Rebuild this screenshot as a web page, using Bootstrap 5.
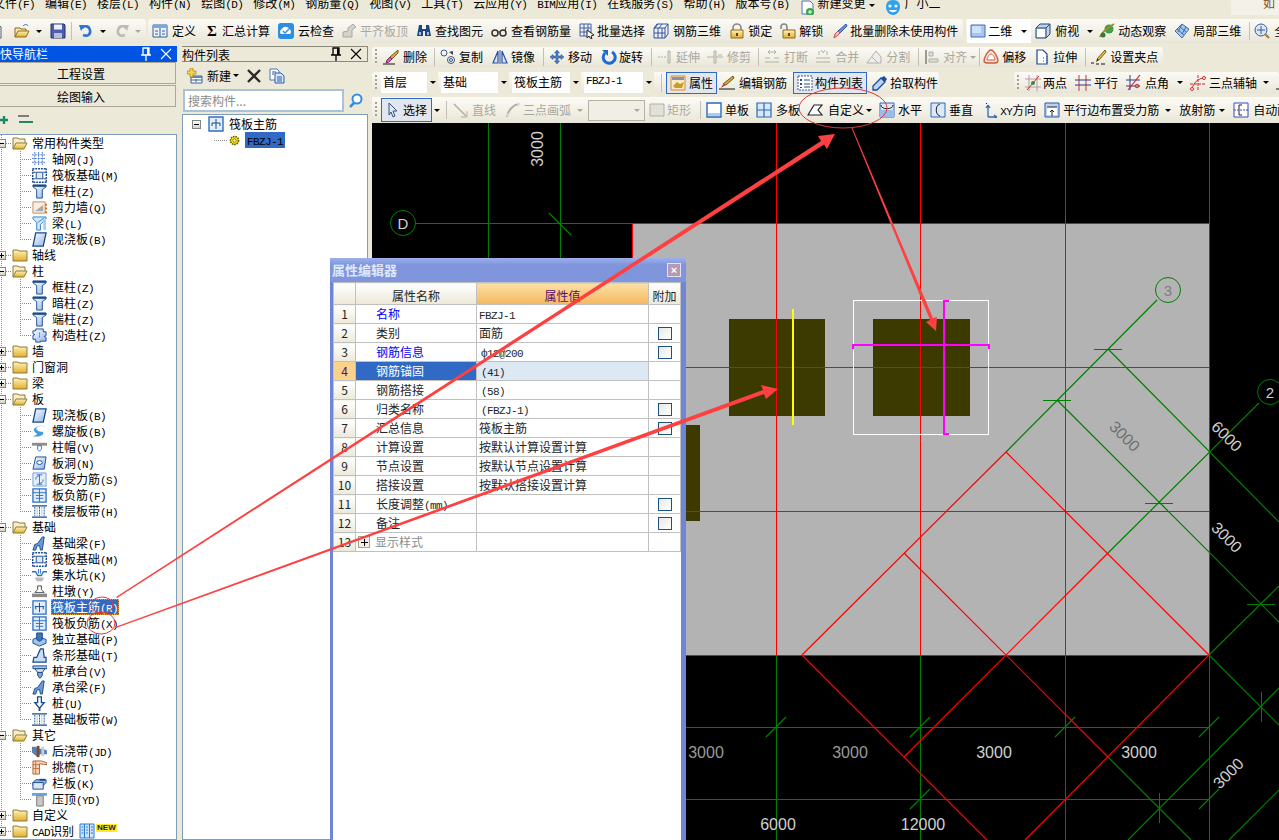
<!DOCTYPE html>
<html lang="zh">
<head>
<meta charset="UTF-8">
<title>钢筋算量</title>
<link href="https://cdn.jsdelivr.net/npm/bootstrap@5.3.2/dist/css/bootstrap.min.css" rel="stylesheet">
<style>
    body { margin: 0; background: #ece9d8; overflow: hidden; color: #000; font: 12px/16px "Noto Sans CJK SC", sans-serif; }
    .app-shell { position: relative; width: 1279px; height: 840px; overflow: hidden; background: #ece9d8; }
    .lt { font: 11px/12px "Liberation Mono", "Noto Sans CJK SC", monospace; letter-spacing: -.6px; }

    /* menu + toolbars */
    .menu-strip { height: 15px; overflow: hidden; margin-left: -7px; gap: 10px; }
    .menu-strip > span { line-height: 14px; margin-top: -4px; white-space: nowrap; }
    .menu-ic { margin-top: 4px; width: 15px; height: 15px; }
    .menu-right { color: #8a4a10; background: #f4f2e8; width: 48px; padding-left: 32px; }
    .tool-top { height: 30px; padding-top: 4px; }
    .band { height: 24px; border-radius: 3px; white-space: nowrap; flex: none; background: linear-gradient(#fbfaf5, #f1efe4 60%, #e8e5d8); }
    .ti { display: inline-flex; align-items: center; gap: 4px; margin-right: 8px; flex: none; }
    .ti.off, .off { color: #a9a89f; }
    .ic { width: 16px; height: 16px; flex: none; }
    .sg { width: 16px; text-align: center; font: bold 15px/16px "Liberation Serif", serif; }
    .sep { width: 1px; height: 18px; background: #c4c1b4; flex: none; }
    .car { width: 0; height: 0; flex: none; border: 3px solid transparent; border-top-color: #000; border-bottom-width: 0; }
    .car.off { border-top-color: #a9a89f; }
    .grip { width: 2px; height: 16px; margin: 0 6px 0 3px; flex: none; background: repeating-linear-gradient(#a5a294 0 2px, transparent 2px 4px); }
    .tb-a { margin-left: -12px; padding-right: 5px; }
    .tb-b { margin-left: 2px; padding: 0 5px 0 4px; }
    .tb-c { margin-left: 3px; flex-grow: 1; padding-left: 1px; }
    .dim-box { width: 64px; height: 24px; background: #fff; padding-left: 3px; flex: none; }
    .r2 { height: 20px; margin-top: 2px; width: 791px; }
    .r3 { height: 21px; margin-top: 5px; }
    .r3-left { width: 567px; height: 21px; }
    .r3-left .grip { margin-right: 4px; }
    .r3-right { margin-left: 75px; width: 265px; height: 21px; }
    .r4 { height: 26px; margin-top: 4px; border-radius: 0; width: 907px; }
    .r4 .pick-btn { width: 51px; height: 24px; gap: 2px; padding: 0 0 0 3px; }
    .cb { display: flex; height: 21px; background: #fff; flex: none; margin-right: 3px; padding-left: 2px; line-height: 19px; overflow: hidden; }
    .cb i { margin-left: auto; width: 11px; background: #ece9d8; display: flex; align-items: center; justify-content: center; }
    .cb .lt { line-height: 19px; }
    .w57 { width: 57px; } .w68 { width: 68px; } .w69 { width: 69px; } .w70 { width: 70px; }
    .chk { display: inline-flex; align-items: center; gap: 3px; padding: 0 3px; border: 1px solid #316ac5; background: #e1e6ef; flex: none; height: 22px; }
    .dis-box { width: 57px; height: 21px; border: 1px solid #b5b3a6; background: #f1efe5; display: flex; align-items: center; justify-content: flex-end; padding-right: 4px; flex: none; }

    /* spacing steps Bootstrap has no utility for */
    .g2 { gap: 2px; } .g3 { gap: 3px; } .g5 { gap: 5px; }
    .gr2 { margin-right: 2px; } .gr3 { margin-right: 3px; } .gr4 { margin-right: 4px; } .gr5 { margin-right: 5px; } .gr6 { margin-right: 6px; } .gr7 { margin-right: 7px; } .gr8 { margin-right: 8px; } .gr9 { margin-right: 9px; } .gr10 { margin-right: 10px; }
    .gl2 { margin-left: 2px; } .gl3 { margin-left: 3px; } .gl4 { margin-left: 4px; } .gl5 { margin-left: 5px; } .gl6 { margin-left: 6px; }

    /* dock panels */
    .nav-pane { width: 177px; flex: none; }
    .list-pane { width: 186px; margin-left: 5px; flex: none; }
    .pane-title { height: 16px; line-height: 15px; white-space: nowrap; overflow: hidden; padding-right: 3px; margin-top: 1px; }
    .pane-title.on { background: #0054e3; color: #fff; }
    .pane-title.idle { border: 1px solid #8b8979; border-width: 1px 1px 1px 0; }
    .wide-btn { height: 22px; width: 190px; margin: 0 0 1px -14px; padding: 0; border: 1px solid #aca899; border-radius: 0; background: #ece9d8; font-size: 12px; line-height: 19px; display: block; color: #000; }
    .mini-tool { height: 26px; }
    .tree-box { background: #fff; border: 1px solid #7f9db9; border-left: 0; height: 706px; overflow: hidden; }
    .tree-rw { height: 16px; display: flex; align-items: center; white-space: nowrap; background-repeat: no-repeat; }
    .tree-rw > span { display: block; height: 16px; line-height: 16px; }
    .tree-rw.top { padding-left: 12px; background-image: repeating-linear-gradient(90deg, #8a8a8a 0 1px, transparent 1px 2px), repeating-linear-gradient(#8a8a8a 0 1px, transparent 1px 2px); background-size: 12px 1px, 1px 16px; background-position: 0 8px, 1px 0; }
    .tree-rw.kid { padding-left: 32px; background-image: repeating-linear-gradient(90deg, #8a8a8a 0 1px, transparent 1px 2px), repeating-linear-gradient(#8a8a8a 0 1px, transparent 1px 2px), repeating-linear-gradient(#8a8a8a 0 1px, transparent 1px 2px); background-size: 12px 1px, 1px 16px, 1px 16px; background-position: 20px 8px, 20px 0, 1px 0; }
    .tree-rw.kid.end { background-size: 12px 1px, 1px 9px, 1px 16px; }
    .tree-rw.tail { background-size: 12px 1px, 1px 9px; }
    .tree-rw .ic { margin-right: 4px; }
    .tree-rw.kid .ic { width: 15px; height: 15px; margin-right: 5px; }
    .tree-rw .cad-ic { margin-left: 5px; margin-right: 0; }
    .xp { width: 9px; height: 9px; margin-left: -15px; margin-right: 6px; flex: none; border: 1px solid #848484; background: linear-gradient(#000, #000) center / 5px 1px no-repeat, linear-gradient(#fff, #d5d2c6); }
    .xp.pl { background: linear-gradient(#000, #000) center / 5px 1px no-repeat, linear-gradient(#000, #000) center / 1px 5px no-repeat, linear-gradient(#fff, #d5d2c6); }
    .tree-rw > .hit { background: #316ac5; color: #fff; margin-left: -1px; padding: 0 1px; outline: 1px dotted #e0a040; outline-offset: -1px; }
    .tree-rw > .new-tag { background: #ffe92e; color: #223; font: bold 8px/8px "Liberation Sans", sans-serif; height: 8px; padding: 0 1px; margin: -6px 0 0 1px; }
    .list-tool { height: 27px; padding-left: 5px; }
    .seek { height: 23px; padding-left: 1px; }
    .seek .form-control { width: 161px; height: 23px; padding: 0 3px; border: 2px solid #a9c2dc; border-radius: 0; font-size: 12px; }
    .seek .form-control::placeholder { color: #8a8a8a; }
    .list-tree { height: 726px; margin-top: 2px; padding-top: 1px; border: 1px solid #7f9db9; background: #fff; overflow: hidden; }
    .list-top { padding-left: 25px; }
    .list-top .xp { margin-left: -16px; margin-right: 7px; }
    .list-top .ic { margin-right: 5px; }
    .list-kid { padding-left: 45px; background: repeating-linear-gradient(90deg, #8a8a8a 0 1px, transparent 1px 2px) 31px 8px / 14px 1px no-repeat; }
    .list-kid .ic { width: 13px; height: 13px; margin-right: 4px; }
    .tree-rw > .list-hit { background: #316ac5; color: #000; padding: 0 2px; }

    .main-col { width: 907px; margin-left: 4px; flex: none; }
    .cad-wrap { height: 717px; background: #000; }
    .cad-wrap svg { display: block; }
    .cad-txt { font: 16px "Liberation Sans", sans-serif; }

    /* floating property window */
    .prop-win { position: absolute; left: 330px; top: 258px; width: 356px; height: 590px; background: #fff; border: solid #6f85d8; border-width: 0 5px 0 3px; z-index: 5; }
    .prop-head { height: 24px; margin: 0 -5px 0 -3px; padding: 0 5px 0 2px; background: linear-gradient(#9db0ea, #7e95dc 30%, #7f96dc); color: #dfe7fa; font-weight: 700; font-size: 13px; line-height: 24px; }
    .close-x { width: 14px; height: 14px; background: #b39ab8; color: #fff; border: 1px solid #e8e2ee; font: bold 11px/12px "Liberation Sans", sans-serif; text-align: center; }
    .prop-tbl { table-layout: fixed; width: 347px; margin: 0; border-color: #c0c0c0; vertical-align: middle; }
    .prop-tbl tr { height: 19px; }
    .prop-tbl td, .prop-tbl th { padding: 0; height: 19px; line-height: 16px; font-size: 12px; border-color: #c0c0c0; white-space: nowrap; overflow: hidden; box-shadow: none; }
    .prop-tbl thead tr { height: 22px; }
    .prop-tbl th { height: 22px; font-weight: 400; text-align: center; background: linear-gradient(#fff, #ece9d8); }
    .prop-tbl th.val-h { background: linear-gradient(#fcdfa6, #f4b85e); color: #5b0f6b; }
    .prop-tbl td.no { background: linear-gradient(#fff, #ece9d8); text-align: center; }
    .prop-tbl td.no.cur { background: #fbd28c; color: #5b0f6b; }
    .prop-tbl td.nm { padding-left: 20px; }
    .prop-tbl td.nm.cur { background: #316ac5; color: #fff; }
    .prop-tbl td.v { padding-left: 2px; }
    .prop-tbl td.v.cur { background: #dde8f5; }
    .lt.in { margin-left: 2px; }
    .prop-tbl td.blue-t { color: #0000ff; }
    .prop-tbl td.gray-t { color: #8c8c8c; }
    .c1 { width: 22px; } .c2 { width: 121px; } .c3 { width: 172px; } .c4 { width: 32px; }
    .prop-tbl .form-check-input { display: block; width: 14px; height: 13px; margin: 0 auto; border: 1px solid #1c5180; border-radius: 0; background: linear-gradient(135deg, #e8e8e2, #fff); }
    .plus-box { display: inline-block; width: 12px; height: 12px; border: 1px solid #a5a294; margin: 2px 5px 0 2px; vertical-align: top; background: linear-gradient(#000, #000) center / 7px 1px no-repeat, linear-gradient(#000, #000) center / 1px 7px no-repeat, #f1efe6; }

    .mark-up { position: absolute; left: 0; top: 0; z-index: 9; pointer-events: none; }
</style>
</head>
<body>

<!-- icon sprite -->
<svg class="d-block" width="0" height="0">
<defs>
<linearGradient id="gF" x1="0" y1="0" x2="0" y2="1"><stop offset="0" stop-color="#fff3b8"/><stop offset="1" stop-color="#e3ad2a"/></linearGradient>
<linearGradient id="gB" x1="0" y1="0" x2="1" y2="1"><stop offset="0" stop-color="#fff"/><stop offset="1" stop-color="#8fb4ea"/></linearGradient>
<symbol id="fold" viewBox="0 0 16 16"><path d="M1 3h5l1 1h8v10H1z" fill="url(#gF)" stroke="#8c7a3c"/></symbol>
<symbol id="foldo" viewBox="0 0 16 16"><path d="M1 14V3h5l1 1h6v4" fill="#f8edc4" stroke="#8c7a3c"/><path d="M1 14l3-6h11l-3 6z" fill="url(#gF)" stroke="#8c7a3c"/></symbol>
<symbol id="grid" viewBox="0 0 16 16"><path d="M0 3h15M0 7h15M0 11h15M3 0v14M7 0v14M11 0v14" stroke="#3f74c4" fill="none" stroke-dasharray="2 1"/></symbol>
<symbol id="raft" viewBox="0 0 16 16"><path d="M.5.5h15v15H.5z" fill="#fff" stroke="#174a8c" stroke-width="2" stroke-dasharray="2 1"/><path d="M4.500 4.500h7v7h-7z" fill="#dce8f8" stroke="#174a8c"/><path d="M1 4.500h3M12 4.500h3M1 11.500h3M12 11.500h3" stroke="#174a8c"/></symbol>
<symbol id="col" viewBox="0 0 16 16"><path d="M1 1h14v2l-4 3v9H5V6L1 3z" fill="url(#gB)" stroke="#174a8c"/><path d="M1 1h14v2H1z" fill="#174a8c"/></symbol>
<symbol id="gcol" viewBox="0 0 16 16"><path d="M4 1h8v3h3v4l-2 1 2 1v4H9v1H4v-3H1V8l2-1-2-1V3h3z" fill="url(#gB)" stroke="#174a8c"/><path d="M8 5v6" stroke="#174a8c" stroke-dasharray="1 1"/></symbol>
<symbol id="wall" viewBox="0 0 16 16"><path d="M1 2h13v12H1z" fill="#fbeee0" stroke="#b98a66"/><path d="M3 12l9-7v7z" fill="#aaa"/><path d="M15 4v2M15 8v2M15 12v2" stroke="#e06a10" stroke-width="2"/></symbol>
<symbol id="beam" viewBox="0 0 16 16"><path d="M1 1h14v2L9 9v6H5V7L1 3z" fill="#d6e6f9" stroke="#2f80c8"/><path d="M6 7l7-5" stroke="#2f80c8"/><path d="M12 3h3v12h-3z" fill="#a6ccf0"/></symbol>
<symbol id="slab" viewBox="0 0 16 16"><path d="M4 1h11l-3 14H1z" fill="url(#gB)" stroke="#174a8c" stroke-width="1.4"/></symbol>
<symbol id="spir" viewBox="0 0 16 16"><path d="M15 3C9 1 3 3 5 6s8 1 7 4-7 4-11 3c3-1 5-2 4-3S2 8 2 6s6-6 13-3z" fill="#3f9be0"/></symbol>
<symbol id="mush" viewBox="0 0 16 16"><path d="M0 3h16v3H0z" fill="#8d8d8d"/><path d="M6 6h4v4l-2 2-2-2z" fill="#fff" stroke="#2f6fc0"/></symbol>
<symbol id="hole" viewBox="0 0 16 16"><path d="M4 1h11l-2 13H1z" fill="url(#gB)" stroke="#174a8c"/><ellipse cx="8" cy="7" rx="3" ry="2" fill="#fff" stroke="#174a8c"/></symbol>
<symbol id="rs" viewBox="0 0 16 16"><path d="M1 1h14v14H1z" fill="#e4eefb" stroke="#6f9bd6"/><path d="M5 3h6M8 3v10M5 13h6M4 8c0-3 2-4 4-4M12 8c0 3-2 4-4 4" stroke="#2f6fc0" fill="none"/></symbol>
<symbol id="rn" viewBox="0 0 16 16"><path d="M1 1h14v14H1z" fill="#e4eefb" stroke="#2f6fc0" stroke-width="1.4"/><path d="M1 5h14M8 1v14M4 8h8M4 11h8" stroke="#2f6fc0"/></symbol>
<symbol id="band2" viewBox="0 0 16 16"><path d="M0 2h16M0 14h16" stroke="#174a8c" stroke-width="1.5"/><path d="M3 3v10M8 3v10M13 3v10" stroke="#174a8c" stroke-dasharray="2 1"/><path d="M5 3h1v10H5zM10 3h1v10h-1z" fill="#a6c6ee"/></symbol>
<symbol id="fbeam" viewBox="0 0 16 16"><path d="M1 15l2-6 3-1 5-7h2l-2 14H9l-1-5-3 1-1 4z" fill="#6b9ad8" stroke="#174a8c"/></symbol>
<symbol id="pit" viewBox="0 0 16 16"><path d="M0 4h4l2 4h4l2-4h4" fill="none" stroke="#2f6fc0" stroke-width="1.4"/><path d="M3 10h10l-2 4H5z" fill="#b9b9b9"/><path d="M7 1v5M9 1v5" stroke="#2f6fc0"/></symbol>
<symbol id="pier" viewBox="0 0 16 16"><path d="M6 2h4v4l3 3H3l3-3z" fill="#fff" stroke="#444"/><path d="M0 10h16v4H0z" fill="#8a8a8a"/><path d="M0 10h16" stroke="#ddd"/></symbol>
<symbol id="rmain" viewBox="0 0 16 16"><path d="M1 1h14v14H1z" fill="#e4eefb" stroke="#2f6fc0" stroke-width="1.4"/><path d="M8 3v10M3 7h10" stroke="#174a8c"/><path d="M4 7v3M12 7v3" stroke="#174a8c"/></symbol>
<symbol id="iso" viewBox="0 0 16 16"><path d="M1 8l6-3 8 3v4l-7 3-7-3z" fill="#a3c4ea" stroke="#174a8c"/><path d="M5 1h6v7l-3 2-3-2z" fill="#3e73b6" stroke="#174a8c"/></symbol>
<symbol id="strip" viewBox="0 0 16 16"><path d="M1 15l1-5h3l4-9h3l1 9h2v5z" fill="#c9dcf4" stroke="#174a8c" stroke-width="1.3"/></symbol>
<symbol id="capst" viewBox="0 0 16 16"><path d="M1 2h15v3H1z" fill="#a9c8ee" stroke="#174a8c"/><path d="M3 5h11l-3 4H6z" fill="#ddd" stroke="#174a8c"/><path d="M6 9h5v3l-2 3h-1l-2-3z" fill="#7ea6dc" stroke="#174a8c"/></symbol>
<symbol id="pile" viewBox="0 0 16 16"><path d="M6 1h4v6h3l-5 6-5-6h3z" fill="#fff" stroke="#174a8c" stroke-width="1.4"/><path d="M7 13h2v3H7z" fill="#174a8c"/></symbol>
<symbol id="post" viewBox="0 0 16 16"><path d="M0 3h4l2 2h6l4 2v4H9l-4 2-3-2-2-2z" fill="#5b80b0"/><path d="M5 2h3v12H5z" fill="#7a4b2c"/><path d="M10 3h3v10h-3z" fill="#bcd0ea"/></symbol>
<symbol id="eave" viewBox="0 0 16 16"><path d="M1 1h9l6 2v2l-8-1v11H1z" fill="#f5d8bc" stroke="#a56236"/><path d="M1 5h7M1 9h7M4 1v14" stroke="#c96a2a"/></symbol>
<symbol id="rail" viewBox="0 0 16 16"><path d="M1 7l3-3h11v3l-3 3H1z" fill="#8fb6e8" stroke="#174a8c"/><path d="M1 7h11v7H1z" fill="#d8e6f7" stroke="#174a8c"/><path d="M8 3h6v2H8z" fill="#174a8c"/></symbol>
<symbol id="press" viewBox="0 0 16 16"><path d="M0 1h16v3H0z" fill="#6ea0dc"/><path d="M5 4h7v11H5z" fill="#c8c8c8" stroke="#777"/></symbol>
<symbol id="cross" viewBox="0 0 16 16"><path d="M1 1h14v14H1z" fill="#e4eefb" stroke="#2f6fc0" stroke-width="1.4"/><path d="M8 3v10M4 7h8M4 7v3M12 7v3" stroke="#174a8c" fill="none"/></symbol>
<symbol id="gear" viewBox="0 0 16 16"><circle cx="8" cy="8" r="5" fill="#ffe600" stroke="#6b6000" stroke-width="2" stroke-dasharray="2 1"/><circle cx="8" cy="8" r="2" fill="#fff" stroke="#6b6000"/></symbol>

<symbol id="new" viewBox="0 0 16 16"><path d="M3 1h7l3 3v11H3z" fill="#fff" stroke="#556"/></symbol>
<symbol id="open" viewBox="0 0 16 16"><path d="M1 14V5h5l1 1h5v2" fill="#f8e7ad" stroke="#8a6d1f"/><path d="M1 14l3-6h11l-3 6z" fill="url(#gF)" stroke="#8a6d1f"/><path d="M9 3c2-2 4-2 5 0" stroke="#2d62b8" fill="none"/></symbol>
<symbol id="save" viewBox="0 0 16 16"><path d="M1 1h13l1 1v13H1z" fill="#4a5fb4" stroke="#26316f"/><path d="M4 1.500h8v5H4z" fill="#eef1fa"/><path d="M4 10h8v5H4z" fill="#b9bfcc"/></symbol>
<symbol id="undo" viewBox="0 0 16 16"><path d="M5 12c5 2 8-1 7-5S7 2 4 5" fill="none" stroke="#2d74d2" stroke-width="2.600"/><path d="M1 2h6L3 8z" fill="#2d74d2"/></symbol>
<symbol id="redo" viewBox="0 0 16 16"><path d="M11 12C6 14 3 11 4 7s5-5 8-2" fill="none" stroke="#bdbcb4" stroke-width="2.600"/><path d="M15 2H9l4 6z" fill="#bdbcb4"/></symbol>
<symbol id="def" viewBox="0 0 16 16"><path d="M1 2h14v12H1z" fill="#eef3fb" stroke="#31619f"/><path d="M1 2h14v3H1z" fill="#7ea7db"/><path d="M8 5v9M3 8h3M3 11h3M10 8h3M10 11h3" stroke="#31619f"/></symbol>
<symbol id="cloud" viewBox="0 0 16 16"><rect x="0" y="0" width="16" height="16" rx="3" fill="#2c8fe2"/><path d="M3 11a3 3 0 0 1 1-5c1-3 6-3 7 0a3 3 0 0 1 1 5z" fill="#fff"/><path d="M5 8l2 2 4-4" stroke="#2c8fe2" fill="none" stroke-width="1.400"/></symbol>
<symbol id="lvl" viewBox="0 0 16 16"><path d="M1 14V9l5-1V5l5-4 3 3-4 3v7z" fill="#d4d3cb" stroke="#aaa99f"/></symbol>
<symbol id="bino" viewBox="0 0 16 16"><path d="M3 2h3v4h4V2h3l2 11h-6V8H7v5H1z" fill="#20457e"/><path d="M3 9h2v3H3zM11 9h2v3h-2z" fill="#9dbbe6"/></symbol>
<symbol id="spec" viewBox="0 0 16 16"><circle cx="4" cy="10" r="3" fill="none" stroke="#333" stroke-width="1.500"/><circle cx="12" cy="10" r="3" fill="none" stroke="#333" stroke-width="1.500"/><path d="M7 9h2M14 8l1-4" stroke="#333"/></symbol>
<symbol id="batch" viewBox="0 0 16 16"><path d="M1 1h11v12H1zM1 5h11M1 9h11M5 1v12M9 1v12" fill="#eef" stroke="#41619a"/><path d="M8 7l7 5-3 1 1 3-2-1-1-2-2 2z" fill="#fff" stroke="#222"/></symbol>
<symbol id="r3d" viewBox="0 0 16 16"><path d="M1 5h11v10H1zM1 5l3-4h11l-3 4M15 1v10l-3 4M5 5v10M9 5v10M1 10h11M5 1L2 5M9 1L6 5" fill="none" stroke="#2d55a8"/></symbol>
<symbol id="lock" viewBox="0 0 16 16"><path d="M4 7V5a4 4 0 0 1 8 0v2" fill="none" stroke="#888" stroke-width="1.600"/><path d="M2 7h12v8H2z" fill="url(#gF)" stroke="#926a18"/><path d="M7 10h2v3H7z" fill="#60460c"/></symbol>
<symbol id="unlock" viewBox="0 0 16 16"><path d="M1 6V4a3 3 0 0 1 6 0v3" fill="none" stroke="#888" stroke-width="1.600"/><path d="M3 7h12v8H3z" fill="url(#gF)" stroke="#926a18"/><path d="M8 10h2v3H8z" fill="#60460c"/></symbol>
<symbol id="brush" viewBox="0 0 16 16"><path d="M14 1l1 2-7 7-2-2z" fill="#6a8fd8" stroke="#3358a8"/><path d="M6 8l2 2-3 3-3 2 1-4z" fill="#f0c0c0" stroke="#c85050"/></symbol>
<symbol id="d2" viewBox="0 0 16 16"><path d="M1 2h14v12H1z" fill="#a9c6f2" stroke="#3f6cc0"/><path d="M2 3h9v7H2z" fill="#cfe0fa"/></symbol>
<symbol id="topv" viewBox="0 0 16 16"><path d="M1 5l4-4h10v10l-4 4H1z" fill="#bcd4ee" stroke="#23456e"/><path d="M2 6h8v8H2z" fill="#fff"/><path d="M1 5h10v10M11 5l4-4" fill="none" stroke="#23456e"/></symbol>
<symbol id="orbit" viewBox="0 0 16 16"><circle cx="10" cy="6" r="4.500" fill="#3da04a"/><path d="M1 14C3 9 8 5 15 1" stroke="#a6882c" fill="none" stroke-width="2"/><circle cx="4" cy="12" r="2.500" fill="#2d7c3c"/></symbol>
<symbol id="loc3" viewBox="0 0 16 16"><path d="M8 1l7 5-7 9-7-7z" fill="#a8c6ec" stroke="#3f6ca8"/><path d="M5 3l7 6M3 6l7 6M8 1L4 9M12 4l-4 7" stroke="#3f6ca8"/></symbol>
<symbol id="zoomb" viewBox="0 0 16 16"><circle cx="7" cy="7" r="6" fill="#dbe6f6" stroke="#3a5a9a"/><path d="M7 3v8M3 7h8" stroke="#3a5a9a"/><path d="M11 11l4 4" stroke="#a8823a" stroke-width="2.400"/></symbol>

<symbol id="eras" viewBox="0 0 16 16"><path d="M15 1l-8 7 2 2 6-6z" fill="#d8a65c" stroke="#7a5818"/><path d="M7 8l2 2-3 3-3 1 1-3z" fill="#d55fb0" stroke="#803070"/><path d="M0 15h12" stroke="#111"/></symbol>
<symbol id="cop" viewBox="0 0 16 16"><circle cx="4" cy="4" r="3" fill="none" stroke="#3a5a8a"/><circle cx="11" cy="11" r="3.500" fill="none" stroke="#3a5a8a"/><circle cx="11" cy="11" r="1.500" fill="none" stroke="#3a5a8a"/><path d="M9 3l4 3V2z" fill="#444"/></symbol>
<symbol id="mir" viewBox="0 0 16 16"><path d="M6 2L1 14h5zM10 2l5 12h-5z" fill="#d6e4f8" stroke="#2a52a4" stroke-width="1.200"/><path d="M8 1v14" stroke="#2a52a4"/></symbol>
<symbol id="mov" viewBox="0 0 16 16"><path d="M8 1l2.500 3H9v3h3V5.500L15 8l-3 2.500V9H9v3h1.500L8 15l-2.500-3H7V9H4v1.500L1 8l3-2.500V7h3V4H5.500z" fill="#4d7ec4" stroke="#224a86" stroke-width=".5"/></symbol>
<symbol id="rot" viewBox="0 0 16 16"><path d="M11 3a6 6 0 1 1-7 1" fill="none" stroke="#1f6ad2" stroke-width="3"/><path d="M1 1h6v6z" fill="#1f6ad2"/></symbol>
<symbol id="ext" viewBox="0 0 16 16"><path d="M1 8h9" stroke="#b2b1a8" stroke-dasharray="2 1"/><path d="M11 2h2v12h-2z" fill="#e8e7df" stroke="#b2b1a8"/></symbol>
<symbol id="trim" viewBox="0 0 16 16"><path d="M0 8h16" stroke="#b2b1a8"/><path d="M7 2h2v12H7z" fill="#e8e7df" stroke="#b2b1a8"/><path d="M11 6h4" stroke="#b2b1a8"/></symbol>
<symbol id="brk" viewBox="0 0 16 16"><path d="M1 9h5M10 9h5M1 13h14M4 3h8M6 1l-2 2 2 2M10 1l2 2-2 2" fill="none" stroke="#b2b1a8"/></symbol>
<symbol id="mrg" viewBox="0 0 16 16"><path d="M1 9h14M1 13h14M6 1l2 3 2-3M4 2v4M12 2v4" fill="none" stroke="#b2b1a8"/></symbol>
<symbol id="spl" viewBox="0 0 16 16"><path d="M1 14h14V8l-5-6-9 12zM6 8l6 6" fill="#eee" stroke="#b2b1a8"/></symbol>
<symbol id="ali" viewBox="0 0 16 16"><path d="M2 1v14" stroke="#9b9a91" stroke-width="2"/><path d="M5 3h4v4H5zM5 10h9v3H5z" fill="#ddd" stroke="#b2b1a8"/></symbol>
<symbol id="offs" viewBox="0 0 16 16"><path d="M8 1c3 0 7 8 7 11 0 2-2 2-7 2s-7 0-7-2C1 9 5 1 8 1z" fill="#fbe6de" stroke="#d05a3c" stroke-width="1.400"/><path d="M8 5c2 0 4 4 4 6H4c0-2 2-6 4-6z" fill="#fff" stroke="#d05a3c"/></symbol>
<symbol id="strt" viewBox="0 0 16 16"><path d="M2 1h6l4 4v10H2z" fill="#fff" stroke="#1f4a94" stroke-width="1.200"/><path d="M12 7v8M8 9h1M8 12h1" stroke="#1f4a94" stroke-dasharray="1 1"/></symbol>
<symbol id="setg" viewBox="0 0 16 16"><path d="M14 1l1 2-7 8-2-1z" fill="#e5c24c" stroke="#7a5c10"/><path d="M6 10l2 1-3 2z" fill="#222"/><path d="M0 14h3M5 15h3M10 15h4" stroke="#111"/></symbol>
<symbol id="prop" viewBox="0 0 16 16"><path d="M1 1h14v14H1z" fill="#fbe9c8" stroke="#de8a24"/><path d="M2 2h12v3H2z" fill="#7f93b5"/><path d="M3 11l4-4 3 2 4-2-2 6H5z" fill="#c89a2c"/></symbol>
<symbol id="edr" viewBox="0 0 16 16"><path d="M14 1l1 2-8 7-3-1z" fill="#d9a63a" stroke="#7a5618"/><path d="M0 14h16" stroke="#111"/><path d="M4 9l3 1-5 3z" fill="#c85050"/></symbol>
<symbol id="lst" viewBox="0 0 16 16"><path d="M1 1h14v14H1z" fill="#fff" stroke="#3a5a8a" stroke-dasharray="2 1"/><path d="M3 4h2v2H3zM3 8h2v2H3zM3 12h2v1H3z" fill="#2a4a8a"/><path d="M7 5h6M7 9h6M7 12h6" stroke="#2a4a8a"/></symbol>
<symbol id="pick" viewBox="0 0 16 16"><path d="M9 3l4 4-8 8H1v-4z" fill="#b9d4f4" stroke="#1e4a9c" stroke-width="1.300"/><path d="M9 3l3-2 3 3-2 3z" fill="#1e4a9c"/></symbol>
<symbol id="two" viewBox="0 0 16 16"><path d="M0 4h16M0 12h16M4 0v16M12 0v16" stroke="#b89aa8"/><path d="M14 1L2 15" stroke="#d02a2a"/><circle cx="8" cy="8" r="2" fill="#3a8a3a"/></symbol>
<symbol id="par" viewBox="0 0 16 16"><path d="M4 0v16M11 0v16" stroke="#c8383c"/><path d="M0 5h16M0 10h16" stroke="#2a3a8a"/></symbol>
<symbol id="ang" viewBox="0 0 16 16"><path d="M0 5h14M0 11h14M4 0v15" stroke="#2a3a8a"/><path d="M14 0L2 15" stroke="#d0282c" stroke-width="1.200"/><circle cx="11" cy="11" r="1.800" fill="none" stroke="#d0282c"/></symbol>
<symbol id="tri" viewBox="0 0 16 16"><path d="M2 15C3 8 8 3 15 3" fill="none" stroke="#d0282c"/><path d="M0 9h16M8 0v16" stroke="#d0282c" stroke-dasharray="3 1"/><circle cx="2" cy="14" r="1.500" fill="#fff" stroke="#d0282c"/><circle cx="14" cy="3" r="1.500" fill="#fff" stroke="#d0282c"/></symbol>

<symbol id="arr" viewBox="0 0 16 16"><path d="M4 1l8 8H8l2 5-2 1-2-5-2 3z" fill="#dfe8f6" stroke="#36507e"/></symbol>
<symbol id="lin" viewBox="0 0 16 16"><path d="M1 2l12 12" stroke="#b2b1a8" stroke-width="1.600"/><path d="M14 15H8M14 15V9" stroke="#b2b1a8"/></symbol>
<symbol id="arc" viewBox="0 0 16 16"><path d="M2 15C3 8 8 3 14 2" fill="none" stroke="#b2b1a8" stroke-width="2"/><circle cx="3" cy="13" r="1.500" fill="#ddd"/><circle cx="14" cy="2" r="1.500" fill="#ddd"/></symbol>
<symbol id="rct" viewBox="0 0 16 16"><path d="M1 2h14v12H1z" fill="#e2e1d8" stroke="#b2b1a8"/></symbol>
<symbol id="one" viewBox="0 0 16 16"><path d="M1 1h14v14H1z" fill="#fff" stroke="#2a6ab8" stroke-width="1.400"/><path d="M2 11h12v3H2z" fill="#a8cdf2"/></symbol>
<symbol id="many" viewBox="0 0 16 16"><path d="M1 1h14v14H1zM8 1v14M1 8h14" fill="#d8e8f9" stroke="#2a6ab8" stroke-width="1.200"/></symbol>
<symbol id="cst" viewBox="0 0 16 16"><path d="M1 13L7 3h8L11 8l4 5z" fill="#fff" stroke="#222" stroke-width="1.200"/></symbol>
<symbol id="hor" viewBox="0 0 16 16"><path d="M1 1h14v14H1z" fill="#dce8f8" stroke="#2a6ab8"/><path d="M1 8h14v7H1z" fill="#99bde8"/><path d="M2 3c0 5 12 5 12 0" fill="none" stroke="#222"/></symbol>
<symbol id="ver" viewBox="0 0 16 16"><path d="M1 1h14v14H1z" fill="#dce8f8" stroke="#2a6ab8"/><path d="M10 2C5 3 5 13 10 14" fill="none" stroke="#222"/></symbol>
<symbol id="xy" viewBox="0 0 16 16"><path d="M6 15V3M6 15h9M6 3L4 6M6 3l2 3M15 15l-3-2M15 15l-3 2" stroke="#2a6ab8" fill="none" stroke-width="1.300"/><path d="M4 1l1 1M5 1L4 2" stroke="#111"/></symbol>
<symbol id="pedg" viewBox="0 0 16 16"><path d="M1 1h14v14H1z" fill="#bcd4f2" stroke="#2a5aa8"/><path d="M3 5h10v8H3z" fill="#fff"/><path d="M3 5h10M8 14V8M6 10l2-2 2 2" stroke="#222" fill="none"/></symbol>
<symbol id="auto" viewBox="0 0 16 16"><path d="M1 1h14v14H1z" fill="#fff" stroke="#3a4ab8"/><path d="M9 3H6v10h3" fill="none" stroke="#222"/><path d="M1 8h14" stroke="#3a4ab8" stroke-dasharray="2 1"/></symbol>

<symbol id="addn" viewBox="0 0 16 16"><path d="M4 8h11v7H4z" fill="#fff" stroke="#3c5f9c"/><path d="M4 8h11v2H4z" fill="#5d86c4"/><path d="M9 11v3M4 12h11" stroke="#3c5f9c"/><path d="M3 0h3v3h3v3H6v3H3V6H0V3h3z" fill="#f8d24c" stroke="#927414" stroke-width=".6"/></symbol>
<symbol id="delx" viewBox="0 0 16 16"><path d="M2 2l12 12M14 2L2 14" stroke="#2a2a2a" stroke-width="2.400"/></symbol>
<symbol id="dup" viewBox="0 0 16 16"><path d="M1 1h7l2 2v9H1z" fill="#fff" stroke="#4a74b4"/><path d="M6 5h6l3 3v7H6z" fill="#dbe7f8" stroke="#2a5aa8"/><path d="M8 9h5M8 11h5M8 13h5M3 4h4M3 6h2" stroke="#2a5aa8"/></symbol>
<symbol id="mag" viewBox="0 0 16 16"><circle cx="9" cy="6" r="4.500" fill="#fff" stroke="#2f8fe0" stroke-width="2"/><path d="M6 10l-4 4" stroke="#2f8fe0" stroke-width="2.500"/></symbol>
<symbol id="doc2" viewBox="0 0 16 16"><path d="M3 1h8l3 3v10H3z" fill="#fff" stroke="#4a74b4"/><circle cx="11" cy="12" r="4" fill="#3aa64a"/><path d="M9 12h4M11 10v4" stroke="#fff"/></symbol>
<symbol id="face" viewBox="0 0 16 16"><path d="M8 0c5 0 7 3 7 7s-3 8-7 8-7-4-7-8 2-7 7-7z" fill="#2ea2ea"/><circle cx="5" cy="6" r="1.600" fill="#fff"/><circle cx="11" cy="6" r="1.600" fill="#fff"/><path d="M4 10c2 3 6 3 8 0z" fill="#fff"/></symbol>
<symbol id="cadt" viewBox="0 0 16 16"><path d="M1 1h14v14H1z" fill="#cfe4fb" stroke="#2a7ad8"/><path d="M5.500 1v14M10.500 1v14" stroke="#2a7ad8"/><path d="M2.500 4h2M2.500 7h2M2.500 10h2M7 4h2M7 7h2M7 10h2M12 4h2M12 7h2M12 10h2" stroke="#2a7ad8"/></symbol>
<symbol id="pin" viewBox="0 0 16 16"><path d="M5 2h6v7H5zM3 9h10M8 9v6" fill="none" stroke="currentColor" stroke-width="1.300"/><path d="M9 2h2v7H9z" fill="currentColor"/></symbol>
<symbol id="clsx" viewBox="0 0 16 16"><path d="M3 3l10 10M13 3L3 13" stroke="currentColor" stroke-width="1.100"/></symbol>
</defs>
</svg>

<div class="app-shell d-flex flex-column">
    <!-- Menu -->
    <div class="menu-strip d-flex flex-none">
        <span>文件<span class="lt">(F)</span></span><span>编辑<span class="lt">(E)</span></span><span>楼层<span class="lt">(L)</span></span><span>构件<span class="lt">(N)</span></span><span>绘图<span class="lt">(D)</span></span><span>修改<span class="lt">(M)</span></span><span>钢筋量<span class="lt">(Q)</span></span><span>视图<span class="lt">(V)</span></span><span>工具<span class="lt">(T)</span></span><span>云应用<span class="lt">(Y)</span></span><span><span class="lt">BIM</span>应用<span class="lt">(I)</span></span><span>在线服务<span class="lt">(S)</span></span><span>帮助<span class="lt">(H)</span></span><span>版本号<span class="lt">(B)</span></span>
        <span class="d-flex align-items-start"><svg class="ic menu-ic gr2"><use href="#doc2"/></svg>新建变更<i class="car ms-1 mt-2"></i></span>
        <span class="d-flex align-items-start"><svg class="ic menu-ic gr3"><use href="#face"/></svg>广小二</span>
        <span class="ms-auto menu-right">如</span>
    </div>

    <!-- Standard toolbar -->
    <div class="tool-top d-flex flex-none">
        <div class="band d-flex align-items-center tb-a">
            <svg class="ic gr10"><use href="#new"/></svg>
            <svg class="ic"><use href="#open"/></svg><i class="car gl6 gr8"></i>
            <svg class="ic"><use href="#save"/></svg><i class="sep gl5 gr6"></i>
            <svg class="ic"><use href="#undo"/></svg><i class="car gl6 gr8"></i>
            <svg class="ic"><use href="#redo"/></svg><i class="car off gl5"></i>
        </div>
        <div class="band d-flex align-items-center tb-b">
            <span class="ti"><svg class="ic"><use href="#def"/></svg>定义</span>
            <span class="ti g2"><span class="sg">Σ</span>汇总计算</span>
            <span class="ti"><svg class="ic"><use href="#cloud"/></svg>云检查</span>
            <span class="ti off g2"><svg class="ic"><use href="#lvl"/></svg>平齐板顶</span>
            <span class="ti g3"><svg class="ic"><use href="#bino"/></svg>查找图元</span>
            <span class="ti"><svg class="ic"><use href="#spec"/></svg>查看钢筋量</span>
            <span class="ti g2"><svg class="ic"><use href="#batch"/></svg>批量选择</span>
            <span class="ti"><svg class="ic"><use href="#r3d"/></svg>钢筋三维</span>
            <span class="ti g3"><svg class="ic"><use href="#lock"/></svg>锁定</span>
            <span class="ti g3 gr9"><svg class="ic"><use href="#unlock"/></svg>解锁</span>
            <span class="ti g2 m-0"><svg class="ic"><use href="#brush"/></svg>批量删除未使用构件</span>
        </div>
        <div class="band d-flex align-items-center tb-c">
            <span class="dim-box d-flex align-items-center"><svg class="ic gr2"><use href="#d2"/></svg>二维<i class="car ms-auto me-1"></i></span>
            <span class="ti gl4 gr4"><svg class="ic"><use href="#topv"/></svg>俯视</span><i class="car gl4 gr6"></i>
            <span class="ti g3"><svg class="ic"><use href="#orbit"/></svg>动态观察</span>
            <span class="ti g3"><svg class="ic"><use href="#loc3"/></svg>局部三维</span>
            <i class="sep gr4"></i>
            <span class="ti m-0"><svg class="ic"><use href="#zoomb"/></svg>全</span>
        </div>
    </div>

    <div class="d-flex flex-grow-1">
        <!-- Nav pane -->
        <div class="nav-pane">
            <div class="pane-title on d-flex"><span>快导航栏</span><span class="ms-auto d-flex align-items-center"><svg class="ic"><use href="#pin"/></svg><svg class="ic ms-1"><use href="#clsx"/></svg></span></div>
            <button class="btn wide-btn" type="button">工程设置</button>
            <button class="btn wide-btn" type="button">绘图输入</button>
            <div class="mini-tool d-flex align-items-center">
                <svg width="10" height="12" viewBox="0 0 10 12"><path d="M0 5h8M4 1v8" stroke="#1b8a6a" stroke-width="2.400"/></svg>
                <svg class="ms-2" width="16" height="12" viewBox="0 0 16 12"><path d="M0 1h11" stroke="#111"/><path d="M1 7h14" stroke="#1b8a6a" stroke-width="2"/></svg>
            </div>
            <div class="tree-box" id="navTree"></div>
        </div>

        <!-- List pane -->
        <div class="list-pane">
            <div class="pane-title idle d-flex"><span>构件列表</span><span class="ms-auto d-flex align-items-center"><svg class="ic"><use href="#pin"/></svg><svg class="ic ms-1"><use href="#clsx"/></svg></span></div>
            <div class="d-flex align-items-center list-tool">
                <span class="ti gap-1 gr2"><svg class="ic"><use href="#addn"/></svg>新建</span><i class="car gr7"></i>
                <svg class="ic gr7"><use href="#delx"/></svg><svg class="ic"><use href="#dup"/></svg>
            </div>
            <div class="seek d-flex">
                <input class="form-control" type="text" placeholder="搜索构件...">
                <span class="flex-grow-1 d-flex align-items-center justify-content-center"><svg class="ic"><use href="#mag"/></svg></span>
            </div>
            <div class="list-tree">
                <div class="tree-rw list-top"><i class="xp"></i><svg class="ic"><use href="#cross"/></svg><span>筏板主筋</span></div>
                <div class="tree-rw list-kid"><svg class="ic"><use href="#gear"/></svg><span class="list-hit"><span class="lt">FBZJ-1</span></span></div>
            </div>
        </div>

        <!-- Work area -->
        <div class="main-col">
            <div class="band r2 d-flex align-items-center">
                <i class="grip"></i>
                <span class="ti gr7"><svg class="ic"><use href="#eras"/></svg>删除</span><i class="sep gr5"></i>
                <span class="ti g3 gr9"><svg class="ic"><use href="#cop"/></svg>复制</span>
                <span class="ti g3"><svg class="ic"><use href="#mir"/></svg>镜像</span><i class="sep gr5"></i>
                <span class="ti g3 gr9"><svg class="ic"><use href="#mov"/></svg>移动</span>
                <span class="ti g2"><svg class="ic"><use href="#rot"/></svg>旋转</span><i class="sep gr5"></i>
                <span class="ti off g3 gr7"><svg class="ic"><use href="#ext"/></svg>延伸</span>
                <span class="ti off gr7"><svg class="ic"><use href="#trim"/></svg>修剪</span><i class="sep gr5"></i>
                <span class="ti off gr7"><svg class="ic"><use href="#brk"/></svg>打断</span>
                <span class="ti off gr7"><svg class="ic"><use href="#mrg"/></svg>合并</span>
                <span class="ti off"><svg class="ic"><use href="#spl"/></svg>分割</span><i class="sep gr5"></i>
                <span class="ti off g3 gr3"><svg class="ic"><use href="#ali"/></svg>对齐</span><i class="car off gr3"></i><i class="sep gr3"></i>
                <span class="ti g3 gr9"><svg class="ic"><use href="#offs"/></svg>偏移</span>
                <span class="ti g2"><svg class="ic"><use href="#strt"/></svg>拉伸</span><i class="sep gr5"></i>
                <span class="ti g3 m-0"><svg class="ic"><use href="#setg"/></svg>设置夹点</span>
            </div>

            <div class="d-flex r3">
                <div class="band r3-left d-flex align-items-center">
                    <i class="grip"></i>
                    <div class="cb w57">首层<i><b class="car"></b></i></div>
                    <div class="cb w68">基础<i><b class="car"></b></i></div>
                    <div class="cb w69">筏板主筋<i><b class="car"></b></i></div>
                    <div class="cb w70"><span class="lt">FBZJ-1</span><i><b class="car"></b></i></div>
                    <i class="sep ms-1 me-1"></i>
                    <span class="chk"><svg class="ic"><use href="#prop"/></svg>属性</span>
                    <span class="ti gl2 gr4"><svg class="ic"><use href="#edr"/></svg>编辑钢筋</span>
                    <span class="chk gl2 g2"><svg class="ic"><use href="#lst"/></svg>构件列表</span>
                    <span class="ti g2 gl5 me-0"><svg class="ic"><use href="#pick"/></svg>拾取构件</span>
                </div>
                <div class="band r3-right d-flex align-items-center">
                    <i class="grip"></i>
                    <span class="ti g2"><svg class="ic"><use href="#two"/></svg>两点</span>
                    <span class="ti g3"><svg class="ic"><use href="#par"/></svg>平行</span>
                    <span class="ti g3"><svg class="ic"><use href="#ang"/></svg>点角</span><i class="car gr7"></i>
                    <span class="ti g3 gr6"><svg class="ic"><use href="#tri"/></svg>三点辅轴</span><i class="car gr7"></i>
                    <svg class="ic"><use href="#setg"/></svg>
                </div>
            </div>

            <div class="band r4 d-flex align-items-center">
                <i class="grip gr4"></i>
                <span class="chk pick-btn"><svg class="ic"><use href="#arr"/></svg>选择</span><i class="car gl2 gr6"></i><i class="sep gr6"></i>
                <span class="ti off g3 gr9"><svg class="ic"><use href="#lin"/></svg>直线</span>
                <span class="ti off g2 gr6"><svg class="ic"><use href="#arc"/></svg>三点画弧</span><i class="car off gr5"></i>
                <span class="dis-box gr4"><i class="car off"></i></span>
                <span class="ti off g2 gr9"><svg class="ic"><use href="#rct"/></svg>矩形</span><i class="sep gr5"></i>
                <span class="ti g3 gr7"><svg class="ic"><use href="#one"/></svg>单板</span>
                <span class="ti gr7"><svg class="ic"><use href="#many"/></svg>多板</span>
                <span class="ti g5 gr2"><svg class="ic"><use href="#cst"/></svg>自定义</span><i class="car gr7"></i>
                <span class="ti g3"><svg class="ic"><use href="#hor"/></svg>水平</span>
                <span class="ti g3 gr9"><svg class="ic"><use href="#ver"/></svg>垂直</span>
                <span class="ti g2"><svg class="ic"><use href="#xy"/></svg><span><span class="lt">XY</span>方向</span></span>
                <span class="ti g3 gr6"><svg class="ic"><use href="#pedg"/></svg>平行边布置受力筋</span><i class="car gr8"></i>
                <span class="ti gr4">放射筋</span><i class="car gr8"></i>
                <span class="ti m-0"><svg class="ic"><use href="#auto"/></svg>自动配筋</span>
            </div>

            <!-- CAD canvas -->
            <div class="cad-wrap">
                <svg width="907" height="717" viewBox="372 123 907 717">
                    <g shape-rendering="crispEdges" fill="none">
                        <rect x="632" y="223" width="577" height="432" fill="#b3b3b3"/>
                        <g fill="#3d3a00">
                            <rect x="729" y="319" width="96" height="97"/>
                            <rect x="873" y="319" width="97" height="97"/>
                            <rect x="640" y="425" width="60" height="96"/>
                        </g>
                        <g stroke="#008000">
                            <path d="M488.500 123V258M560.500 123V258M415 223.500H632"/>
                            <path d="M776.500 655V840M920.500 655V840M1065.500 655V840M1209.500 655V840"/>
                            <path d="M632 727.500H1209M632 799.500H1209"/>
                            <path d="M1094 349.500h28M1043 400.500h28M1145 503.500h28M1247 604.500h28"/>
                            <path d="M1261.500 692v30M1159.500 793v30"/>
                            <g shape-rendering="auto" stroke-width="1.200">
                                <path d="M549 213l22 22"/>
                                <path d="M766 737l20-20M910 737l20-20M1055 737l20-20M1199 737l20-20M910 809l20-20M1199 809l20-20"/>
                                <path d="M1157 300L1006 452"/>
                                <path d="M1259 403L1108 553"/>
                                <path d="M1209 655L1279 586"/>
                                <path d="M1128 840L1279 688"/>
                                <path d="M1229 840L1279 790"/>
                                <path d="M1108 349L1279 522"/>
                                <path d="M1057 400L1279 622"/>
                                <path d="M1209 655L1279 725"/>
                                <path d="M1108 757L1191 840"/>
                            </g>
                        </g>
                        <g stroke="#ff0000">
                            <path d="M632.500 223V655M776.500 123V655M920.500 123V655M1065.500 123V655M1209.500 123V655"/>
                            <path d="M632 223.500H1209M632 367.500H1209M632 511.500H1209M632 655.500H1209"/>
                            <g shape-rendering="auto" stroke-width="1.200">
                                <path d="M1006 452L802 655"/>
                                <path d="M1108 553L904 757"/>
                                <path d="M1209 655L1025 840"/>
                                <path d="M1006 452L1209 655"/>
                                <path d="M904 553L1108 757"/>
                                <path d="M802 655L987 840"/>
                            </g>
                        </g>
                        <rect x="853.500" y="300.500" width="135" height="134" stroke="#fff"/>
                        <path d="M793 309V425" stroke="#ffff00" stroke-width="2"/>
                        <path d="M949 301H944V434H949M853 349V345H989V349" stroke="#ff00ff" stroke-width="2"/>
                    </g>
                    <g fill="none" stroke="#008000">
                        <circle cx="403" cy="223" r="12.500"/>
                        <circle cx="1168" cy="290" r="12.500"/>
                        <circle cx="1270" cy="392" r="12.500"/>
                    </g>
                    <g class="cad-txt" fill="#d0d0d0" text-anchor="middle">
                        <text x="403" y="229" font-size="15">D</text>
                        <text x="1168" y="296" font-size="15" fill="#808080">3</text>
                        <text x="1270" y="398" font-size="15">2</text>
                        <text transform="translate(543 149) rotate(-90)">3000</text>
                        <text x="706" y="758" fill="#9a9a9a">3000</text>
                        <text x="850" y="758" fill="#9a9a9a">3000</text>
                        <text x="994" y="758">3000</text>
                        <text x="1139" y="758">3000</text>
                        <text x="778" y="830">6000</text>
                        <text x="923" y="830">12000</text>
                        <text transform="translate(1125 436) rotate(45)" fill="#707070" y="6">3000</text>
                        <text transform="translate(1227 436) rotate(45)" y="6">6000</text>
                        <text transform="translate(1227 537) rotate(45)" y="6">3000</text>
                        <text transform="translate(1228 773) rotate(-45)" y="6">3000</text>
                    </g>
                </svg>
            </div>
        </div>
    </div>

    <!-- Property editor window -->
    <div class="prop-win">
        <div class="prop-head d-flex align-items-center justify-content-between"><span>属性编辑器</span><span class="close-x">×</span></div>
        <table class="table table-bordered prop-tbl">
            <colgroup><col class="c1"><col class="c2"><col class="c3"><col class="c4"></colgroup>
            <thead><tr><th></th><th>属性名称</th><th class="val-h">属性值</th><th>附加</th></tr></thead>
            <tbody id="propRows"></tbody>
        </table>
    </div>

    <!-- Red hand-drawn notes on top of the screenshot -->
    <svg class="mark-up" width="1279" height="840" viewBox="0 0 1279 840">
        <g fill="#ff4040">
            <path d="M116 597L821 141 818 136 835 134 827 149 824 144.500 117 598z"/>
            <path d="M115 627L763 390 761 385 778 389 766 399 764 394 116 628z"/>
            <path d="M851.500 128L930 320 926 322 936 331 937 317 933 318 852.500 128z"/>
        </g>
        <g fill="none" stroke="#e23a3a">
            <ellipse cx="843" cy="108" rx="44" ry="20"/>
            <ellipse cx="102" cy="605" rx="11" ry="8"/>
            <ellipse cx="101" cy="623" rx="14" ry="11"/>
        </g>
    </svg>
</div>

<script src="https://cdn.jsdelivr.net/npm/bootstrap@5.3.2/dist/js/bootstrap.bundle.min.js"></script>
<script>
    // nav tree: [label, code, icon, selected]
    const navData = [
        { name: '常用构件类型', open: true, kids: [['轴网', '(J)', 'grid'], ['筏板基础', '(M)', 'raft'], ['框柱', '(Z)', 'col'], ['剪力墙', '(Q)', 'wall'], ['梁', '(L)', 'beam'], ['现浇板', '(B)', 'slab']] },
        { name: '轴线' },
        { name: '柱', open: true, kids: [['框柱', '(Z)', 'col'], ['暗柱', '(Z)', 'col'], ['端柱', '(Z)', 'col'], ['构造柱', '(Z)', 'gcol']] },
        { name: '墙' },
        { name: '门窗洞' },
        { name: '梁' },
        { name: '板', open: true, kids: [['现浇板', '(B)', 'slab'], ['螺旋板', '(B)', 'spir'], ['柱帽', '(V)', 'mush'], ['板洞', '(N)', 'hole'], ['板受力筋', '(S)', 'rs'], ['板负筋', '(F)', 'rn'], ['楼层板带', '(H)', 'band2']] },
        { name: '基础', open: true, kids: [['基础梁', '(F)', 'fbeam'], ['筏板基础', '(M)', 'raft'], ['集水坑', '(K)', 'pit'], ['柱墩', '(Y)', 'pier'], ['筏板主筋', '(R)', 'rmain', true], ['筏板负筋', '(X)', 'rn'], ['独立基础', '(P)', 'iso'], ['条形基础', '(T)', 'strip'], ['桩承台', '(V)', 'capst'], ['承台梁', '(F)', 'fbeam'], ['桩', '(U)', 'pile'], ['基础板带', '(W)', 'band2']] },
        { name: '其它', open: true, kids: [['后浇带', '(JD)', 'post'], ['挑檐', '(T)', 'eave'], ['栏板', '(K)', 'rail'], ['压顶', '(YD)', 'press']] },
        { name: '自定义' },
        { name: 'CAD识别', cad: true }
    ];

    const ico = (id, cls = '') => `<svg class="ic ${cls}"><use href="#${id}"/></svg>`;
    let html = '';
    navData.forEach(g => {
        let label = g.cad ? `<span><span class="lt">CAD</span>识别</span>${ico('cadt', 'cad-ic')}<span class="new-tag">NEW</span>` : `<span>${g.name}</span>`;
        html += `<div class="tree-rw top ${g.cad ? 'tail' : ''}"><i class="xp ${g.open ? '' : 'pl'}"></i>${ico(g.open ? 'foldo' : 'fold')}${label}</div>`;
        (g.kids || []).forEach((k, i) => {
            let txt = `<span class="${k[3] ? 'hit' : ''}">${k[0]}<span class="lt">${k[1]}</span></span>`;
            html += `<div class="tree-rw kid ${i === g.kids.length - 1 ? 'end' : ''}">${ico(k[2])}${txt}</div>`;
        });
    });
    document.getElementById('navTree').innerHTML = html;

    // property rows: [name, value, has checkbox, blue name]
    const props = [
        ['名称', '<span class="lt">FBZJ-1</span>', false, true],
        ['类别', '面筋', true],
        ['钢筋信息', '<span class="lt in">ф12@200</span>', true, true],
        ['钢筋锚固', '<span class="lt in">(41)</span>', false],
        ['钢筋搭接', '<span class="lt in">(58)</span>', false],
        ['归类名称', '<span class="lt in">(FBZJ-1)</span>', true],
        ['汇总信息', '筏板主筋', true],
        ['计算设置', '按默认计算设置计算', false],
        ['节点设置', '按默认节点设置计算', false],
        ['搭接设置', '按默认搭接设置计算', false],
        ['长度调整<span class="lt">(mm)</span>', '', true],
        ['备注', '', true]
    ];
    let rows = '';
    props.forEach((p, i) => {
        const cur = i === 3 ? 'cur' : '';
        rows += `<tr><td class="no ${cur}">${i + 1}</td><td class="nm ${cur} ${p[3] ? 'blue-t' : ''}">${p[0]}</td><td class="v ${cur}">${p[1]}</td><td>${p[2] ? '<input class="form-check-input" type="checkbox">' : ''}</td></tr>`;
    });
    rows += '<tr><td class="no">13</td><td class="gray-t"><i class="plus-box"></i>显示样式</td><td></td><td></td></tr>';
    document.getElementById('propRows').innerHTML = rows;
</script>
</body>
</html>
